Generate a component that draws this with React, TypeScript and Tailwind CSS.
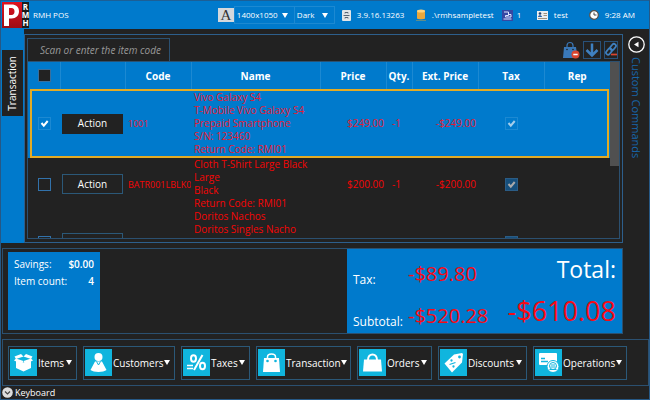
import React, { useState } from 'react';

interface LineItem {
	code: string;
	lines: string[];
	price: string;
	qty: string;
	ext: string;
	height: string;
}

const ITEMS: LineItem[] = [
	{
		code: '1001',
		lines: ['Vivo Galaxy S4', 'T-Mobile Vivo Galaxy S4', 'Prepaid Smartphone', 'S/N: 123460', 'Return Code: RMI01'],
		price: '$249.00',
		qty: '-1',
		ext: '-$249.00',
		height: 'h-[69px]',
	},
	{
		code: 'BATR001LBLK0',
		lines: ['Cloth T-Shirt Large Black', 'Large', 'Black', 'Return Code: RMI01'],
		price: '$200.00',
		qty: '-1',
		ext: '-$200.00',
		height: 'h-[52px]',
	},
	{
		code: '',
		lines: ['Doritos Nachos', 'Doritos Singles Nacho', '', '', ''],
		price: '',
		qty: '',
		ext: '',
		height: 'h-[65px]',
	},
];

const HEADINGS = ['Code', 'Name', 'Price', 'Qty.', 'Ext. Price', 'Tax', 'Rep'];

function Caret({ className = '' }: { className?: string }) {
	return (
		<svg viewBox="0 0 6 5" className={`h-[5px] w-1.5 shrink-0 fill-white ${className}`}>
			<path d="M0 0h6L3 5z" />
		</svg>
	);
}

function HeaderSelect({ label, value, className }: { label: string; value: string; className: string }) {
	return (
		<div className={`relative h-[18px] border border-[#1c89d2] ${className}`}>
			<select
				aria-label={label}
				defaultValue={value}
				className="h-full w-full appearance-none bg-transparent pl-0.5 text-[8px] leading-4 text-white outline-none"
			>
				<option>{value}</option>
			</select>
			<Caret className="pointer-events-none absolute top-1.5 right-1.5" />
		</div>
	);
}

// Square tick box drawn over a native checkbox
function TickBox({
	label,
	checked,
	onChange,
	boxClass,
	tickClass = 'stroke-white',
}: {
	label: string;
	checked: boolean;
	onChange?: (value: boolean) => void;
	boxClass: string;
	tickClass?: string;
}) {
	return (
		<span className="relative inline-block h-[13px] w-[13px] align-middle">
			<input
				type="checkbox"
				aria-label={label}
				checked={checked}
				readOnly={!onChange}
				onChange={(e) => onChange?.(e.target.checked)}
				className={`block h-full w-full appearance-none border ${boxClass}`}
			/>
			{checked && (
				<svg viewBox="0 0 13 13" className={`pointer-events-none absolute inset-0 fill-none stroke-2 ${tickClass}`}>
					<path d="M3.5 6l2.3 2.7L9.7 4" />
				</svg>
			)}
		</span>
	);
}

function TitleBar() {
	return (
		<header className="flex h-[29px] shrink-0 items-center border-t border-[#1c5f96] bg-[#007acc] pl-px text-[8px] text-white">
			<svg viewBox="0 0 20 26" className="h-[26px] w-5 shrink-0">
				<defs>
					<linearGradient id="logo" x1="0" y1="0" x2="0" y2="1">
						<stop offset="0" stopColor="#e0131f" />
						<stop offset="1" stopColor="#9c0c15" />
					</linearGradient>
				</defs>
				<rect width="20" height="26" fill="url(#logo)" />
				<path
					d="M2 2.500h7.500c4.500 0 7.500 2.300 7.500 6.800s-3 7.200-7.500 7.200H7V24H2zM7 6v7h2.500c2 0 3-1.200 3-3.500s-1-3.500-3-3.500z"
					fill="#fff"
					fillRule="evenodd"
				/>
			</svg>
			<span className="flex h-[26px] w-[7px] shrink-0 flex-col items-center justify-center bg-[#1b1b1b] text-[8px] leading-2 font-bold">
				<span>R</span>
				<span>M</span>
				<span>H</span>
			</span>
			<h1 className="ml-1 text-[8px] whitespace-nowrap">RMH POS</h1>
			<div className="ml-auto flex items-center pr-3.5 whitespace-nowrap">
				<span className="flex h-3.5 w-4 items-center justify-center bg-[#d4d8dc] font-['Liberation_Serif',serif] text-[15px] leading-none text-[#333]">
					A
				</span>
				<HeaderSelect label="Resolution" value="1400x1050" className="w-[61px]" />
				<HeaderSelect label="Theme" value="Dark" className="-ml-px w-[41px]" />
				<div className="flex w-[81px] items-center gap-1.5 pl-[7px]">
					<svg viewBox="0 0 9 11" className="h-[11px] w-[9px] shrink-0">
						<rect width="9" height="11" rx="1" fill="#e4e6e8" />
						<path d="M1.500 5.500h6M3 3.500V2.500h3v1M3 8.500V7.500h3v1" stroke="#596674" fill="none" />
					</svg>
					3.9.16.13263
				</div>
				<div className="flex w-[86px] items-center gap-1.5">
					<svg viewBox="0 0 10 12" className="h-3 w-2.5 shrink-0">
						<path d="M1 2v7.500c0 1 8 1 8 0V2z" fill="#e9a73c" />
						<ellipse cx="5" cy="2" rx="4" ry="1.500" fill="#ffd27a" />
						<path d="M0 11.500h10M5 10v1.500" stroke="#5d8d8b" />
					</svg>
					.\rmhsampletest
				</div>
				<div className="flex w-[35px] items-center gap-1">
					<svg viewBox="0 0 11 11" className="h-[11px] w-[11px] shrink-0">
						<rect width="11" height="11" fill="#3547a3" />
						<path d="M2 2h4.500v3.500H3.500V7H9V4.500H6.500M1.500 9h8" stroke="#dfe5ff" fill="none" />
					</svg>
					1
				</div>
				<div className="flex w-[52px] items-center gap-1.5">
					<svg viewBox="0 0 11 9" className="h-[9px] w-[11px] shrink-0">
						<rect width="11" height="9" fill="#eceff1" />
						<circle cx="3" cy="2.500" r="1.300" fill="#24406b" />
						<path d="M1 6c0-2.500 4-2.500 4 0z" fill="#2a62a8" />
						<path d="M6.500 2.500h3.500M6.500 4.500h3.500M1 7.500h9" stroke="#a0927f" />
					</svg>
					test
				</div>
				<div className="flex items-center gap-1.5">
					<svg viewBox="0 0 10 10" className="h-2.5 w-2.5 shrink-0">
						<circle cx="5" cy="5" r="4.300" fill="#fff" stroke="#5c5048" strokeWidth="1.200" />
						<path d="M5 2.500V5h2.500" stroke="#444" fill="none" />
					</svg>
					9:28 AM
				</div>
			</div>
		</header>
	);
}

function ScanBar() {
	return (
		<div className="flex h-[23px] shrink-0 items-center">
			<input
				type="text"
				aria-label="Item code"
				placeholder="Scan or enter the item code"
				className="h-full w-[143px] border border-b-0 border-[#2b5070] bg-[#222] pl-3 text-[10px] text-white italic outline-none placeholder:text-[#999]"
			/>
			<div className="ml-auto flex items-center gap-[3px] pr-0.5">
				<button type="button" aria-label="Remove item" className="h-[18px] w-[18px]">
					<svg viewBox="0 0 18 18">
						<path d="M2 6h12l1.500 11H1z" fill="#3a78b8" />
						<path d="M5 8V4.500C5 .5 11 .5 11 4.500V8" stroke="#3a78b8" strokeWidth="1.200" fill="none" />
						<circle cx="5" cy="8.500" r=".8" fill="#222" />
						<circle cx="11" cy="8.500" r=".8" fill="#222" />
						<circle cx="13.500" cy="13.500" r="4" fill="#d9452f" />
						<path d="M11.300 13.500h4.400" stroke="#fff" strokeWidth="1.500" />
					</svg>
				</button>
				<button type="button" aria-label="Move down" className="h-[18px] w-[18px] border border-[#28517a]">
					<svg viewBox="0 0 16 16" fill="none" stroke="#3f80c0" strokeWidth="2.500">
						<path d="M8 1.500v12M2.500 8L8 13.500 13.500 8" />
					</svg>
				</button>
				<button type="button" aria-label="Unlink" className="h-[18px] w-3.5 border border-[#28517a]">
					<svg viewBox="0 0 12 16" fill="none" stroke="#3f80c0" strokeWidth="1.700">
						<rect x="-3.500" y="-2" width="7" height="4" rx="2" transform="translate(4 9.500) rotate(-50)" />
						<rect x="-3.500" y="-2" width="7" height="4" rx="2" transform="translate(8 5) rotate(-50)" />
						<path d="M6 12.500h6" stroke="#d9452f" />
					</svg>
				</button>
			</div>
		</div>
	);
}

function ItemTable() {
	const [selected, setSelected] = useState([true, false, false]);
	const [all, setAll] = useState(false);

	const toggle = (index: number, value: boolean) => {
		setSelected(selected.map((s, i) => (i === index ? value : s)));
	};

	return (
		<div className="flex min-h-0 flex-1 border border-[#2b5070]">
			<div className="min-w-0 flex-1 overflow-hidden">
				<table className="w-full table-fixed border-collapse text-[10px] leading-[13px]">
					<colgroup>
						<col className="w-8" />
						<col className="w-[65px]" />
						<col className="w-[66px]" />
						<col />
						<col className="w-[66px]" />
						<col className="w-[26px]" />
						<col className="w-[66px]" />
						<col className="w-[66px]" />
						<col className="w-[66px]" />
					</colgroup>
					<thead>
						<tr className="h-[27px] bg-[#007acc] text-white">
							<th className="border-r border-[#1c89d2] p-0 pl-0.5">
								<TickBox
									label="Select all"
									checked={all}
									onChange={setAll}
									boxClass="border-[#3a6f9c] bg-[#222]"
								/>
							</th>
							<th className="border-r border-[#1c89d2]" />
							{HEADINGS.map((heading) => (
								<th
									key={heading}
									className="border-r border-[#1c89d2] p-0 pt-0.5 font-bold whitespace-nowrap last:border-r-0"
								>
									{heading}
								</th>
							))}
						</tr>
					</thead>
					<tbody>
						{ITEMS.map((item, i) => (
							<tr
								key={i}
								className={`relative ${item.height} ${selected[i] ? 'bg-[#007acc] text-[#e51a34]' : 'text-[#f50505]'}`}
							>
								<td className="p-0 text-center">
									{selected[i] && (
										<span className="pointer-events-none absolute inset-y-0 right-px left-0.5 border-2 border-[#e3ab25]" />
									)}
									<TickBox
										label={`Select line ${i + 1}`}
										checked={selected[i]}
										onChange={(value) => toggle(i, value)}
										boxClass={selected[i] ? 'border-[#1c89d2]' : 'border-[#3272ab]'}
									/>
								</td>
								<td className="p-0 text-center">
									<button
										type="button"
										className={`h-5 w-[61px] border bg-[#222] align-middle text-white ${
											selected[i] ? 'border-[#222]' : 'border-[#2b5878]'
										}`}
									>
										Action
									</button>
								</td>
								<td className="overflow-hidden p-0 pl-[3px] text-[9px] whitespace-nowrap">{item.code}</td>
								<td className="p-0 pl-[3px] whitespace-nowrap">
									{item.lines.map((line, n) => (
										<div key={n} className="h-[13px]">
											{line}
										</div>
									))}
								</td>
								<td className="p-0 pr-0.5 text-right">{item.price}</td>
								<td className="p-0 pl-1.5">{item.qty}</td>
								<td className="p-0 pr-0.5 text-right">{item.ext}</td>
								<td className="p-0 text-center">
									<TickBox
										label={`Line ${i + 1} taxable`}
										checked
										boxClass={selected[i] ? 'border-[#1c89d2]' : 'border-[#2b5c85] bg-[#164f7c]'}
										tickClass={selected[i] ? 'stroke-[#a5cdea]' : 'stroke-[#aaa]'}
									/>
								</td>
								<td className="p-0" />
							</tr>
						))}
					</tbody>
				</table>
			</div>
			<div className="w-[9px] shrink-0">
				<div className="h-[59%] bg-[#505050]" />
			</div>
		</div>
	);
}

function SummaryPanel() {
	return (
		<section className="mr-[26px] ml-px flex h-[86px] shrink-0 border border-[#2b5070] text-white">
			<dl className="my-[3px] ml-[5px] grid w-[92px] grid-cols-[auto_auto] content-start justify-between gap-y-px bg-[#007acc] px-1.5 py-1 text-[10px] leading-4">
				<dt>Savings:</dt>
				<dd className="text-right font-semibold">$0.00</dd>
				<dt>Item count:</dt>
				<dd className="text-right font-semibold">4</dd>
			</dl>
			<div className="ml-auto flex w-[275px] justify-between bg-[#007acc] pr-1.5 pl-1.5">
				<dl className="grid grid-cols-[55px_auto] grid-rows-2 items-center">
					<dt className="pt-5 text-xs">Tax:</dt>
					<dd className="pt-2 text-[20px] leading-6 text-[#f80a14]">-$89.80</dd>
					<dt className="pt-5 text-xs">Subtotal:</dt>
					<dd className="pt-2 text-[20px] leading-6 text-[#f80a14]">-$520.28</dd>
				</dl>
				<dl className="flex flex-col justify-center text-right">
					<dt className="text-[23px] leading-9">Total:</dt>
					<dd className="pt-1 text-[27px] leading-10 text-[#f80a14]">-$610.08</dd>
				</dl>
			</div>
		</section>
	);
}

const MENUS: { label: string; width: string; art: React.ReactNode }[] = [
	{
		label: 'Items',
		width: 'w-[69px]',
		art: (
			<>
				<path d="M6 11l7.500 2.500L21 11v8l-7.500 3.500L6 19z" />
				<path d="M6 10L4.500 7.500 11 5l2.500 2.500zM21 10l1.500-2.500L16 5l-2.500 2.500z" />
				<path d="M4 11.500l2-2 7.500 2.500-2 3zM23 11.500l-2-2-7.500 2.500 2 3z" />
			</>
		),
	},
	{
		label: 'Customers',
		width: 'w-[92px]',
		art: (
			<>
				<circle cx="13.500" cy="8" r="4" />
				<path d="M10 12.500h7l4.500 8.500c-3 2.500-13 2.500-16 0z" />
				<path d="M11.500 12.500l2 3.500 2-3.500" fill="none" stroke="#10b5de" />
			</>
		),
	},
	{
		label: 'Taxes',
		width: 'w-[69px]',
		art: (
			<>
				<path d="M4 16.500h6M4 19.500h6" stroke="#fff" strokeWidth="1.500" />
				<g fill="none" stroke="#fff" strokeWidth="2">
					<ellipse cx="10.500" cy="9.500" rx="2.500" ry="3.200" />
					<ellipse cx="19.500" cy="17" rx="2.500" ry="3.200" />
					<path d="M19.500 6l-8.500 15" />
				</g>
			</>
		),
	},
	{
		label: 'Transaction',
		width: 'w-[95px]',
		art: (
			<>
				<path d="M6 9h15l1 14H5z" />
				<path d="M9.500 10V8c0-4 8-4 8 0v2" fill="none" stroke="#fff" strokeWidth="1.500" />
				<circle cx="9.500" cy="12" r="1.300" fill="#10b5de" />
				<circle cx="17.500" cy="12" r="1.300" fill="#10b5de" />
			</>
		),
	},
	{
		label: 'Orders',
		width: 'w-[75px]',
		art: (
			<>
				<path d="M5 10.500h17l1 12H4z" />
				<path d="M9 11c0-7.500 9-7.500 9 0" fill="none" stroke="#fff" strokeWidth="2" />
			</>
		),
	},
	{
		label: 'Discounts',
		width: 'w-[89px]',
		art: (
			<>
				<path d="M14 5.500l8-1.500 1 1-1 8.500L12 23.500 4.500 14.500z" />
				<circle cx="19.500" cy="8" r="1.400" fill="#10b5de" />
				<g stroke="#10b5de" strokeWidth="1.300" fill="#10b5de">
					<path d="M9.500 15.500l6-2" />
					<circle cx="11.500" cy="11.500" r=".5" />
					<circle cx="13.500" cy="17.500" r=".5" />
				</g>
			</>
		),
	},
	{
		label: 'Operations',
		width: 'w-[94px]',
		art: (
			<>
				<rect x="4" y="4" width="18" height="12" rx="1" />
				<path d="M6 9.500h4M6 12.500h7" stroke="#10b5de" strokeWidth="1.500" />
				<circle cx="18" cy="17.500" r="6" stroke="#10b5de" />
				<circle cx="18" cy="17" r="3.500" fill="none" stroke="#10b5de" />
				<path d="M15.500 18h5M16 16h4M14.500 20.500h7" stroke="#10b5de" />
			</>
		),
	},
];

function MenuBar() {
	return (
		<nav className="ml-px flex h-[47px] shrink-0 items-center gap-1.5 border border-[#2b5070] px-[5px]">
			{MENUS.map((menu) => (
				<button
					key={menu.label}
					type="button"
					className={`flex h-[34px] shrink-0 items-center border border-[#2b5878] pl-px text-[10px] text-white ${menu.width}`}
				>
					<svg viewBox="0 0 27 27" className="h-[27px] w-[27px] shrink-0 bg-[#10b5de] fill-white">
						{menu.art}
					</svg>
					<span className="ml-px pt-0.5">{menu.label}</span>
					<Caret className="mr-1 ml-auto" />
				</button>
			))}
		</nav>
	);
}

export default function App(): React.ReactElement {
	return (
		<div className="flex h-screen w-full flex-col overflow-hidden border-x border-[#265885] bg-[#222] font-['Open_Sans','Noto_Sans',sans-serif]">
			<TitleBar />

			<main className="flex min-h-0 flex-1">
				<div className="flex w-[23px] shrink-0 flex-col bg-[#007acc] pt-[21px] pr-px pl-px">
					<button
						type="button"
						className="flex h-[66px] items-center justify-center bg-[#222] text-[10px] text-white"
					>
						<span className="rotate-180 [writing-mode:vertical-rl]">Transaction</span>
					</button>
				</div>
				<div className="mt-[5px] flex min-w-0 flex-1 flex-col border border-[#2d5f8c] px-0.5 pt-[3px] pb-[3px]">
					<ScanBar />
					<ItemTable />
				</div>
				<aside className="flex w-[26px] shrink-0 flex-col items-center pt-[7px]">
					<button type="button" aria-label="Expand custom commands" className="h-[17px] w-[17px]">
						<svg viewBox="0 0 17 17">
							<circle cx="8.500" cy="8.500" r="7.700" fill="none" stroke="#fff" strokeWidth="1.300" />
							<path d="M10.500 5.800v5.400L6 8.500z" fill="#fff" />
						</svg>
					</button>
					<span className="mt-1 text-[11px] leading-4 whitespace-nowrap text-[#1766ab] [writing-mode:vertical-rl]">
						Custom Commands
					</span>
				</aside>
			</main>

			<div className="h-[5px] shrink-0" />
			<SummaryPanel />
			<div className="h-[5px] shrink-0" />
			<MenuBar />

			<footer className="flex h-3.5 shrink-0 items-center border-b border-[#265885] pl-px">
				<button type="button" className="flex items-center gap-0.5 text-[9px] leading-3 text-white">
					<svg viewBox="0 0 11 11" className="h-[11px] w-[11px]">
						<circle cx="5.500" cy="5.500" r="5.300" fill="#ddd" />
						<path d="M3 4.500L5.500 7 8 4.500" fill="none" stroke="#444" strokeWidth="1.200" />
					</svg>
					Keyboard
				</button>
			</footer>
		</div>
	);
}
